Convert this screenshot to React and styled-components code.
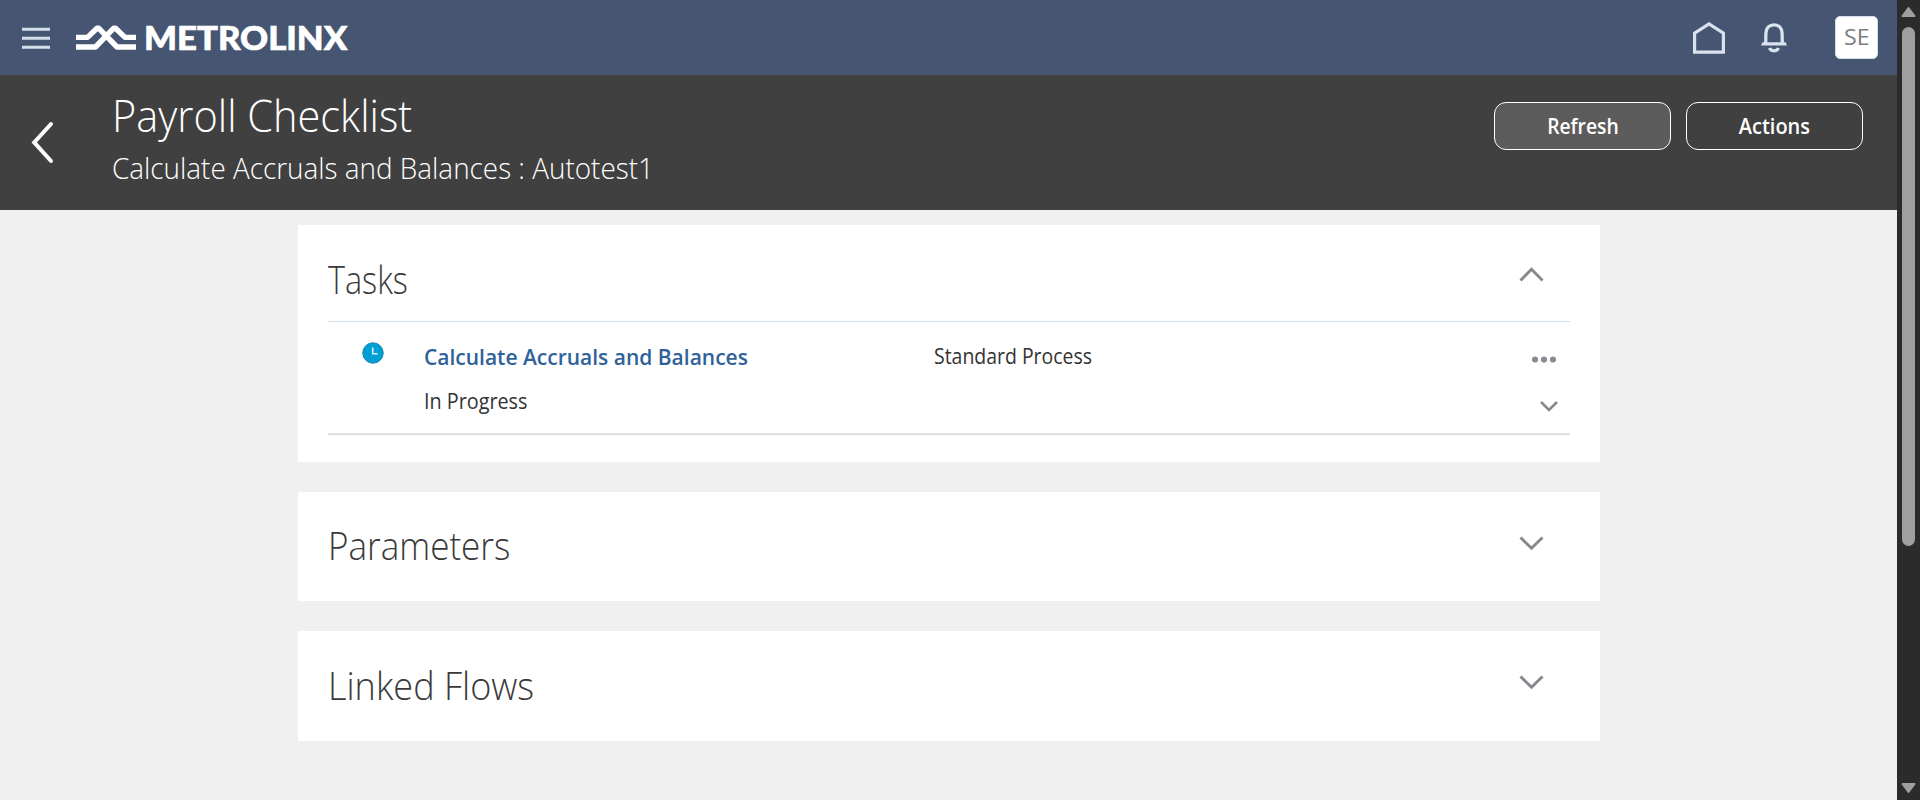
import React from "react";
import styled, { createGlobalStyle } from "styled-components";

const GlobalStyle = createGlobalStyle`
  *, *::before, *::after { box-sizing: border-box; }
  html, body { margin: 0; padding: 0; overflow: hidden; }
  body { font-family: "Open Sans", "Noto Sans", sans-serif; color: #3a3a3a; background: #f0f0f0; }
  svg { display: block; flex: none; }
  h1, h2, p { margin: 0; }
  button { font-family: inherit; padding: 0; }
`;

/* Narrows or widens a run of text from its left (or centre) edge. */
const Fit = styled.span`
  display: inline-block;
  white-space: nowrap;
  transform: scaleX(${(p) => p.$x});
  transform-origin: ${(p) => p.$origin || "left"} center;
`;

const Window = styled.div`
  display: flex;
  width: 1920px;
  height: 800px;
  overflow: hidden;
`;

const Page = styled.div`
  flex: 1;
  min-width: 0;
  display: flex;
  flex-direction: column;
`;

const TopBar = styled.header`
  height: 75px;
  background: #465672;
  display: flex;
  align-items: center;
  padding: 0 19px 0 22px;
`;

const IconButton = styled.button`
  display: flex;
  border: 0;
  background: none;
  margin-left: ${(p) => p.$left || 0}px;
`;

const Logo = styled.div`
  display: flex;
  align-items: center;
  margin-left: 26px;
  flex: 1;
`;

const LogoText = styled.span`
  margin-left: 8px;
  padding-bottom: 2px;
  font-family: "Lato", sans-serif;
  font-weight: 900;
  font-size: 33px;
  line-height: 40px;
  color: #fff;
  -webkit-text-stroke: 0.7px #fff;
`;

const Avatar = styled.div`
  width: 43px;
  height: 43px;
  margin-left: 48px;
  border-radius: 5px;
  border: 1px solid #d5dfeb;
  background: #fff;
  color: #7d7d7d;
  font-size: 21.5px;
  line-height: 40px;
  text-align: center;
`;

const PageHeader = styled.section`
  height: 135px;
  background: #404040;
  color: #fff;
  display: flex;
  align-items: flex-start;
  padding: 0 34px 0 31px;
`;

const BackButton = styled(IconButton)`
  padding-top: 46px;
  width: 81px;
`;

const Heading = styled.div`
  flex: 1;
  padding-top: 12px;
`;

const Title = styled.h1`
  font-size: 45px;
  font-weight: 300;
  line-height: 55px;
`;

const Subtitle = styled.p`
  margin-top: 6px;
  font-size: 29px;
  font-weight: 300;
  line-height: 40px;
`;

const HeaderActions = styled.div`
  display: flex;
  gap: 15px;
  padding-top: 27px;
`;

const HeaderButton = styled.button`
  width: 177px;
  height: 48px;
  border: 1px solid #fff;
  border-radius: 12px;
  background: ${(p) => (p.$filled ? "#5c5c5c" : "transparent")};
  color: #fff;
  font-size: 21px;
  font-weight: 600;
  line-height: 46px;
`;

const Content = styled.main`
  flex: 1;
  padding: 15px 297px 0 298px;
  display: flex;
  flex-direction: column;
  gap: 30px;
`;

const Card = styled.section`
  height: ${(p) => p.$height}px;
  flex: none;
  background: #fff;
  padding: 0 30px;
`;

const CardHead = styled.div`
  height: 96px;
  display: flex;
  justify-content: space-between;
  padding-right: 26px;
`;

const CardTitle = styled.h2`
  padding-top: ${(p) => p.$top}px;
  font-size: 39px;
  font-weight: 300;
  line-height: 60px;
`;

const CardToggle = styled(IconButton)`
  padding-top: ${(p) => p.$top}px;
`;

const TaskRow = styled.div`
  height: 114px;
  display: grid;
  grid-template-columns: 96px 510px 1fr auto;
  padding-top: 19px;
  border-top: 1px solid #cfdeea;
  border-bottom: 1px solid #cfdae4;
  box-shadow: inset 0 -1px 0 #e6e6e6;
`;

const StatusCell = styled.div`
  padding: 1px 0 0 34px;
`;

const Stack = styled.div`
  display: flex;
  flex-direction: column;
  gap: 15px;
`;

const TaskLink = styled.a`
  color: #2f6299;
  font-size: 22px;
  font-weight: 600;
  line-height: 30px;
`;

const TaskText = styled.span`
  font-size: 21px;
  line-height: 30px;
  color: #333;
`;

const RowActions = styled.div`
  display: flex;
  flex-direction: column;
  align-items: flex-end;
  padding: 15px 12px 0 0;
  gap: 38px;
`;

const Scrollbar = styled.aside`
  width: 23px;
  background: #2b2b2b;
  display: flex;
  flex-direction: column;
  align-items: center;
  padding: 6px 0;
`;

const Thumb = styled.div`
  width: 13px;
  height: 519px;
  margin-top: 9px;
  border-radius: 6.5px;
  background: #9f9f9f;
`;

const Spacer = styled.div`
  flex: 1;
`;

const MenuIcon = () => (
  <svg width="28" height="24" viewBox="0 0 28 24">
    <path d="M0 3.3h28M0 12.3h28M0 21.3h28" stroke="#d5dfeb" strokeWidth="3" />
  </svg>
);

const LogoMark = () => (
  <svg width="60" height="26" viewBox="0 0 60 26" fill="none" stroke="#fff" strokeWidth="5.4">
    <path d="M0 12.4H11.5L21 3.2H22.6L41 22H60" strokeLinejoin="round" />
    <path d="M60 12.4H49L39.5 3.2H37.8L19.5 22H0" strokeLinejoin="round" />
  </svg>
);

const HomeIcon = () => (
  <svg width="32" height="32" viewBox="0 0 32 32" fill="none" stroke="#d9e2ed" strokeWidth="3.2">
    <path d="M1.6 30.2V11.2L16 2L30.4 11.2V30.2Z" />
  </svg>
);

const BellIcon = () => (
  <svg width="26" height="30" viewBox="0 0 26 30" fill="none" stroke="#d9e2ed" strokeWidth="3.3">
    <path d="M4.7 20.5L4.9 10.3C5.1 4.8 8.4 1.8 13 1.8S20.9 4.8 21.1 10.3L21.3 20.5" />
    <path d="M0 22.6L1.4 19.2H24.6L26 22.6Z" fill="#d9e2ed" stroke="none" />
    <path d="M8.6 25C10 28.7 16 28.7 17.4 25" />
  </svg>
);

const BackIcon = () => (
  <svg width="23" height="43" viewBox="0 0 23 43" fill="none" stroke="#fff" strokeWidth="4" strokeLinecap="round">
    <path d="M20 3L3.2 21.4L20 40" />
  </svg>
);

const Chevron = ({ up }) => (
  <svg width="25" height="15" viewBox="0 0 25 15" fill="none" stroke="#85888c" strokeWidth="2.9">
    <path d={up ? "M1.5 13.5L12.5 2.3L23.5 13.5" : "M1.5 1.5L12.5 12.3L23.5 1.5"} />
  </svg>
);

const SmallChevron = () => (
  <svg width="18" height="11" viewBox="0 0 18 11" fill="none" stroke="#85888c" strokeWidth="2.5">
    <path d="M1 1L9 9L17 1" />
  </svg>
);

const MoreDots = styled.svg`
  margin-right: 2px;
`;

const MoreIcon = () => (
  <MoreDots width="24" height="7" viewBox="0 0 24 7" fill="#868c92">
    <circle cx="3" cy="3.5" r="3.1" />
    <circle cx="12" cy="3.5" r="3.1" />
    <circle cx="21" cy="3.5" r="3.1" />
  </MoreDots>
);

const ClockIcon = () => (
  <svg width="22" height="22" viewBox="0 0 22 22">
    <circle cx="11" cy="11" r="10.2" fill="#00a0d6" stroke="#0f83ac" strokeWidth="1" />
    <path d="M10.7 5.5V11.8H15.7" fill="none" stroke="#d8f1fa" strokeWidth="1.6" />
  </svg>
);

const Arrow = ({ down }) => (
  <svg width="15" height="12" viewBox="0 0 15 12" fill="#9f9f9f" stroke="#9f9f9f" strokeWidth="2" strokeLinejoin="round">
    <path d={down ? "M1.5 2H13.5L7.5 10Z" : "M1.5 10H13.5L7.5 2Z"} />
  </svg>
);

export default function App() {
  return (
    <Window>
      <GlobalStyle />
      <Page>
        <TopBar>
          <IconButton aria-label="Navigator"><MenuIcon /></IconButton>
          <Logo>
            <LogoMark />
            <LogoText><Fit $x={1.052}>METROLINX</Fit></LogoText>
          </Logo>
          <IconButton aria-label="Home"><HomeIcon /></IconButton>
          <IconButton aria-label="Notifications" $left={36}><BellIcon /></IconButton>
          <Avatar><Fit $x={1.08} $origin="center">SE</Fit></Avatar>
        </TopBar>
        <PageHeader>
          <BackButton aria-label="Back"><BackIcon /></BackButton>
          <Heading>
            <Title><Fit $x={0.922}>Payroll Checklist</Fit></Title>
            <Subtitle><Fit $x={0.961}>Calculate Accruals and Balances : Autotest1</Fit></Subtitle>
          </Heading>
          <HeaderActions>
            <HeaderButton $filled><Fit $x={0.918} $origin="center">Refresh</Fit></HeaderButton>
            <HeaderButton><Fit $x={0.95} $origin="center">Actions</Fit></HeaderButton>
          </HeaderActions>
        </PageHeader>
        <Content>
          <Card $height={237}>
            <CardHead>
              <CardTitle $top={24}><Fit $x={0.83}>Tasks</Fit></CardTitle>
              <CardToggle $top={42} aria-label="Collapse"><Chevron up /></CardToggle>
            </CardHead>
            <TaskRow>
              <StatusCell><ClockIcon /></StatusCell>
              <Stack>
                <TaskLink><Fit $x={0.954}>Calculate Accruals and Balances</Fit></TaskLink>
                <TaskText><Fit $x={0.942}>In Progress</Fit></TaskText>
              </Stack>
              <TaskText><Fit $x={0.926}>Standard Process</Fit></TaskText>
              <RowActions>
                <MoreIcon />
                <SmallChevron />
              </RowActions>
            </TaskRow>
          </Card>
          <Card $height={109}>
            <CardHead>
              <CardTitle $top={23}><Fit $x={0.898}>Parameters</Fit></CardTitle>
              <CardToggle $top={44} aria-label="Expand"><Chevron /></CardToggle>
            </CardHead>
          </Card>
          <Card $height={110}>
            <CardHead>
              <CardTitle $top={24}><Fit $x={0.924}>Linked Flows</Fit></CardTitle>
              <CardToggle $top={44} aria-label="Expand"><Chevron /></CardToggle>
            </CardHead>
          </Card>
        </Content>
      </Page>
      <Scrollbar>
        <Arrow />
        <Thumb />
        <Spacer />
        <Arrow down />
      </Scrollbar>
    </Window>
  );
}
